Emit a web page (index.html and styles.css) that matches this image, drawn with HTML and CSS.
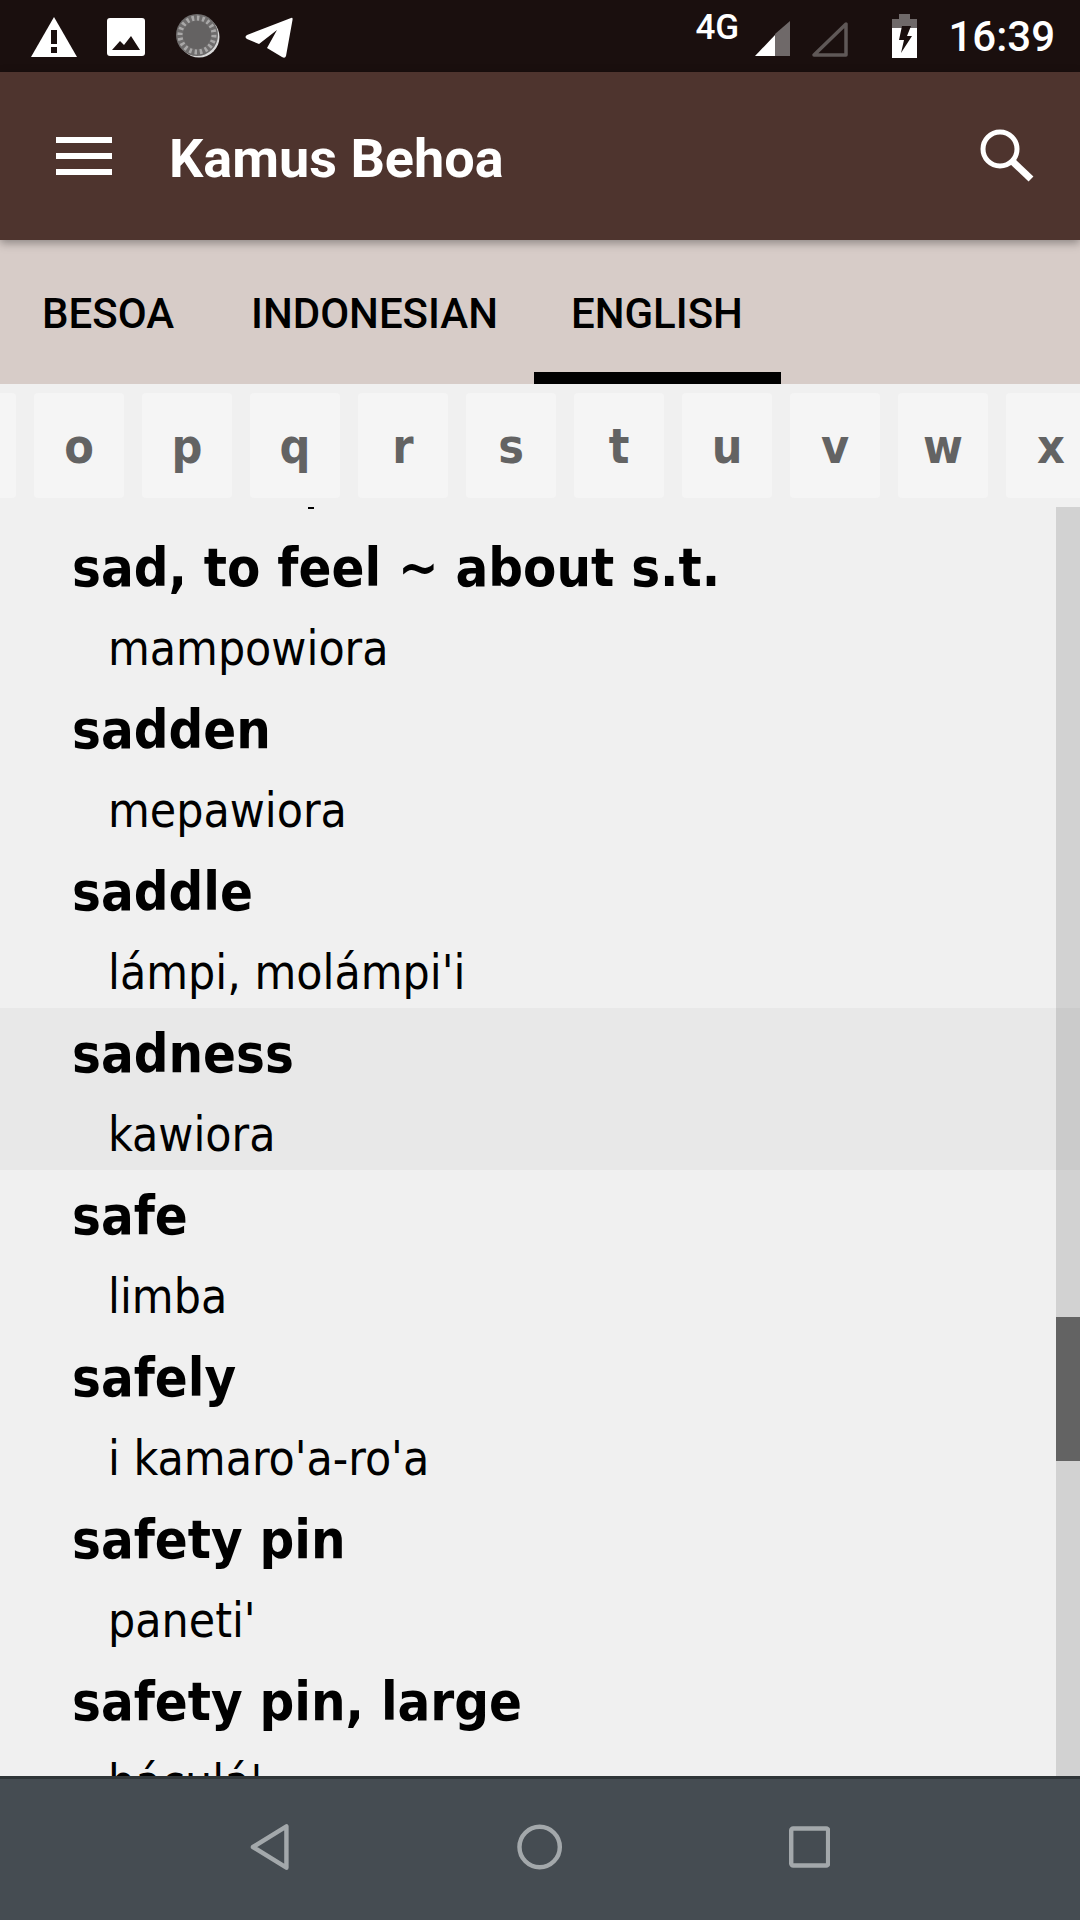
FILE: index.html
```html
<!DOCTYPE html>
<html lang="en">
<head>
    <meta charset="UTF-8">
    <meta name="viewport" content="width=device-width, initial-scale=1.0">
    <title>Kamus Behoa</title>
    <link rel="stylesheet" href="styles.css">
</head>
<body>
    <div class="status-bar">
        <svg class="icon-warning" viewBox="0 0 46 40"><path d="M23 0L46 40H0Z" fill="#fff"/><path d="M20 13h6v14h-6zM20 30h6v6h-6z" fill="#1a0f0e"/></svg>
        <svg class="icon-image" viewBox="0 0 38 38"><rect width="38" height="38" rx="3" fill="#fff"/><path d="M5 32L13 23l4 4 7-9 9 14Z" fill="#1a0f0e"/></svg>
        <svg class="icon-spinner" viewBox="0 0 44 44">
            <circle cx="23" cy="23" r="20.500" fill="#d8d8d8"/>
            <circle cx="21" cy="21" r="21" fill="#6e6c6c"/>
            <circle cx="21" cy="21" r="17" fill="none" stroke="#a9a8a8" stroke-width="5" stroke-dasharray="2.500 2.800"/>
            <circle cx="21" cy="21" r="14" fill="#646262"/>
        </svg>
        <svg class="icon-telegram" viewBox="0 0 48 42"><path d="M46 1Q48 0 47.500 3L41 39Q40 42 37 40L22 31 32 13 14 27 2 22Q-1 20 2 18Z" fill="#fff"/></svg>
        <span class="status-spacer"></span>
        <span class="net-type">4G</span>
        <svg class="icon-signal" viewBox="0 0 37 37"><path d="M36 1V36H21V14Z" fill="#6f6969"/><path d="M21 15V36H1Z" fill="#fff"/></svg>
        <svg class="icon-signal-empty" viewBox="0 0 37 37"><path d="M35 4V35H3Z" fill="none" stroke="#5f5857" stroke-width="3.500" stroke-linejoin="round"/></svg>
        <svg class="icon-battery" viewBox="0 0 25 44"><path d="M7 0h11v5h7v9H0V5h7Z" fill="#6f6969"/><path d="M0 14h25v30H0Z" fill="#fff"/><path d="M10 12h9l-4 10h5L9 39l3-13H7Z" fill="#1a0f0e"/></svg>
        <span class="clock">16:39</span>
    </div>

    <header class="app-bar">
        <div class="menu-icon"><span></span><span></span><span></span></div>
        <h1 class="app-title">Kamus Behoa</h1>
        <svg class="icon-search" viewBox="0 0 54 54"><circle cx="20" cy="20" r="17" fill="none" stroke="#fff" stroke-width="5"/><path d="M32 32L51 50" stroke="#fff" stroke-width="7"/></svg>
    </header>

    <nav class="tabs">
        <div class="tab">BESOA</div>
        <div class="tab">INDONESIAN</div>
        <div class="tab active">ENGLISH</div>
    </nav>

    <div class="letters">
        <div class="letter">n</div>
        <div class="letter">o</div>
        <div class="letter">p</div>
        <div class="letter">q</div>
        <div class="letter">r</div>
        <div class="letter">s</div>
        <div class="letter">t</div>
        <div class="letter">u</div>
        <div class="letter">v</div>
        <div class="letter">w</div>
        <div class="letter">x</div>
    </div>

    <main class="word-list">
        <div class="cut-tail"></div>
        <div class="entry"><div class="word">sad, to feel ~ about s.t.</div><div class="meaning">mampowiora</div></div>
        <div class="entry"><div class="word">sadden</div><div class="meaning">mepawiora</div></div>
        <div class="entry"><div class="word">saddle</div><div class="meaning">lámpi, molámpi'i</div></div>
        <div class="entry selected"><div class="word">sadness</div><div class="meaning">kawiora</div></div>
        <div class="entry"><div class="word">safe</div><div class="meaning">limba</div></div>
        <div class="entry"><div class="word">safely</div><div class="meaning">i kamaro'a-ro'a</div></div>
        <div class="entry"><div class="word">safety pin</div><div class="meaning">paneti'</div></div>
        <div class="entry"><div class="word">safety pin, large</div><div class="meaning">báculá'</div></div>
        <div class="scrollbar"><div class="scroll-thumb"></div></div>
    </main>

    <footer class="nav-bar">
        <svg class="icon-back" viewBox="0 0 40 48"><path d="M37 3V45L3 24Z" fill="none" stroke="#a3a8ab" stroke-width="4.500" stroke-linejoin="round"/></svg>
        <svg class="icon-home" viewBox="0 0 46 46"><circle cx="23" cy="23" r="20.500" fill="none" stroke="#a3a8ab" stroke-width="4.500"/></svg>
        <svg class="icon-recent" viewBox="0 0 42 42"><rect x="2.250" y="2.250" width="37.500" height="37.500" rx="2" fill="none" stroke="#a3a8ab" stroke-width="4.500"/></svg>
    </footer>
</body>
</html>
```

FILE: styles.css
```css
* {
    box-sizing: border-box;
}
body {
    margin: 0;
    width: 1080px;
    height: 1920px;
    overflow: hidden;
    display: flex;
    flex-direction: column;
    background-color: #f0f0f0;
    font-family: "DejaVu Sans", sans-serif;
    font-stretch: condensed;
}

/* status bar */
.status-bar {
    height: 72px;
    flex: none;
    display: flex;
    align-items: center;
    padding: 0 25px 0 31px;
    background-color: #1a0f0e;
    color: #fff;
    font-family: Roboto, sans-serif;
    font-stretch: normal;
}
.icon-warning {
    width: 46px;
    height: 40px;
    margin-top: 1px;
}
.icon-image {
    width: 38px;
    height: 38px;
    margin-left: 30px;
    margin-top: 1px;
}
.icon-spinner {
    width: 44px;
    height: 44px;
    margin-left: 31px;
}
.icon-telegram {
    width: 48px;
    height: 42px;
    margin-left: 25px;
    margin-top: 3px;
}
.status-spacer {
    flex: 1;
}
.net-type {
    width: 44px;
    margin-bottom: 18px;
    font-size: 35px;
    font-weight: 500;
}
.icon-signal {
    width: 37px;
    height: 37px;
    margin-left: 15px;
    margin-top: 5px;
}
.icon-signal-empty {
    width: 37px;
    height: 37px;
    margin-left: 20px;
    margin-top: 5px;
}
.icon-battery {
    width: 25px;
    height: 44px;
    margin-left: 44px;
}
.clock {
    margin-left: 31px;
    font-size: 42px;
    font-weight: 500;
}

/* app bar */
.app-bar {
    height: 168px;
    flex: none;
    position: relative;
    z-index: 2;
    display: flex;
    align-items: center;
    padding: 0 46px 0 56px;
    background-color: #4e342e;
    box-shadow: 0 3px 9px rgba(0, 0, 0, 0.35);
}
.menu-icon {
    width: 56px;
    display: flex;
    flex-direction: column;
    gap: 10px;
}
.menu-icon span {
    height: 6px;
    background-color: #fff;
}
.app-title {
    flex: 1;
    margin: 4px 0 0 57px;
    color: #fff;
    font-family: Roboto, sans-serif;
    font-stretch: normal;
    font-size: 54px;
    font-weight: 700;
}
.icon-search {
    width: 54px;
    height: 54px;
}

/* tabs */
.tabs {
    height: 144px;
    flex: none;
    display: flex;
    padding-left: 5.500px;
    background-color: #d7ccc8;
    font-family: Roboto, sans-serif;
    font-stretch: normal;
    font-size: 42px;
    font-weight: 500;
    color: #000;
}
.tab {
    padding: 49px 36.500px 0;
    border-bottom: 12px solid transparent;
    white-space: nowrap;
}
.tab:first-child {
    margin-right: 4px;
}
.tab.active {
    padding-right: 38.500px;
    border-bottom-color: #000;
}

/* letter strip */
.letters {
    height: 123px;
    flex: none;
    display: flex;
    gap: 18px;
    padding-top: 9px;
    margin-left: -74px;
}
.letter {
    width: 90px;
    height: 105px;
    flex: none;
    display: flex;
    align-items: center;
    justify-content: center;
    border-radius: 4px;
    background-color: #f5f5f5;
    color: #636363;
    font-size: 48px;
    font-weight: 700;
}

/* word list */
.word-list {
    height: 1269px;
    flex: none;
    position: relative;
    overflow: hidden;
}
.cut-tail {
    width: 6px;
    height: 2px;
    margin: 0 0 13px 308px;
    background-color: #000;
}
.entry {
    height: 162px;
    padding: 5px 0 0 72px;
    color: #000;
}
.entry.selected {
    background-color: #e8e8e8;
}
.word {
    height: 81px;
    font-size: 54px;
    font-weight: 700;
    line-height: 81px;
    white-space: nowrap;
}
.meaning {
    padding-left: 36px;
    font-size: 47.700px;
    line-height: 81px;
    white-space: nowrap;
}
.scrollbar {
    position: absolute;
    top: 0;
    right: 0;
    bottom: 0;
    width: 24px;
    background-color: rgba(0, 0, 0, 0.125);
}
.scroll-thumb {
    height: 144px;
    margin-top: 810px;
    background-color: #636363;
}

/* navigation bar */
.nav-bar {
    height: 144px;
    flex: none;
    display: flex;
    align-items: center;
    padding: 0 250px 5px 250px;
    border-top: 3px solid #2f3538;
    background-color: #454c52;
}
.icon-back {
    width: 40px;
    height: 48px;
}
.icon-home {
    width: 46px;
    height: 46px;
    margin-left: 228px;
}
.icon-recent {
    width: 42px;
    height: 42px;
    margin-left: 226px;
}
```
